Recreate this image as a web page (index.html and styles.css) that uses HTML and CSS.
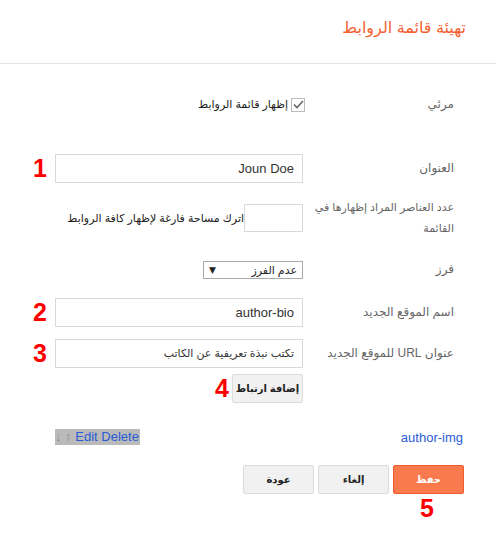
FILE: index.html
```html
<!DOCTYPE html>
<html lang="ar" dir="rtl">
<head>
    <meta charset="UTF-8">
    <meta name="viewport" content="width=device-width, initial-scale=1.0">
    <title>تهيئة قائمة الروابط</title>
    <link rel="stylesheet" href="styles.css">
</head>
<body>
    <div class="dialog">
        <div class="head">
            <h1>تهيئة قائمة الروابط</h1>
        </div>

        <div class="form">
            <div class="row row-visible">
                <div class="lbl">مرئي</div>
                <div class="ctl">
                    <label class="check">
                        <span class="box">
                            <svg width="11" height="9" viewBox="0 0 11 9"><path d="M1 4.5 L4 7.5 L10 1" fill="none" stroke="#666" stroke-width="1.6"/></svg>
                        </span>
                        إظهار قائمة الروابط
                    </label>
                </div>
                <div class="num"></div>
            </div>

            <div class="row row-title">
                <div class="lbl">العنوان</div>
                <div class="ctl"><input class="field" type="text" value="Joun Doe" dir="rtl"></div>
                <div class="num">1</div>
            </div>

            <div class="row row-count">
                <div class="lbl long">عدد العناصر المراد إظهارها في القائمة</div>
                <div class="ctl count">
                    <input class="field small" type="text">
                    <span class="hint">اترك مساحة فارغة لإظهار كافة الروابط</span>
                </div>
                <div class="num"></div>
            </div>

            <div class="row row-sort">
                <div class="lbl">فرز</div>
                <div class="ctl">
                    <div class="select">
                        <span>عدم الفرز</span>
                        <span class="arrow">▼</span>
                    </div>
                </div>
                <div class="num"></div>
            </div>

            <div class="row row-name">
                <div class="lbl">اسم الموقع الجديد</div>
                <div class="ctl"><input class="field" type="text" value="author-bio" dir="rtl"></div>
                <div class="num">2</div>
            </div>

            <div class="row row-url">
                <div class="lbl">عنوان URL للموقع الجديد</div>
                <div class="ctl"><input class="field ar" type="text" value="تكتب نبذة تعريفية عن الكاتب"></div>
                <div class="num">3</div>
            </div>

            <div class="row row-add">
                <div class="lbl"></div>
                <div class="ctl add">
                    <button class="btn">إضافة ارتباط</button>
                    <span class="num">4</span>
                </div>
                <div class="num"></div>
            </div>
        </div>

        <div class="links">
            <a href="#" class="link">author-img</a>
            <span class="actions" dir="ltr"><span class="arr">↓ ↑</span> <a href="#">Edit</a> <a href="#">Delete</a></span>
        </div>

        <div class="footer">
            <div class="save-wrap">
                <button class="btn save">حفظ</button>
                <span class="num five">5</span>
            </div>
            <button class="btn">إلغاء</button>
            <button class="btn">عودة</button>
        </div>
    </div>
</body>
</html>
```

FILE: styles.css
```css
body {
    margin: 0;
    background: #fff;
    font-family: "Liberation Sans", "DejaVu Sans", Arial, sans-serif;
    font-size: 13px;
    color: #333;
}

.dialog {
    width: 496px;
    height: 534px;
}

.head {
    height: 64px;
    border-bottom: 1px solid #e5e5e5;
    padding-right: 30px;
    box-sizing: border-box;
}

.head h1 {
    margin: 0;
    padding-top: 18px;
    font-size: 16px;
    font-weight: normal;
    color: #f4602f;
}

.row {
    display: grid;
    grid-template-columns: 144px 248px 1fr;
    column-gap: 7px;
    align-items: center;
    padding-right: 42px;
}

.lbl {
    color: #666;
    font-size: 12px;
    line-height: 21px;
}

.lbl.long {
    font-size: 11px;
    margin-left: -6px;
}

.ctl {
    display: flex;
    align-items: center;
}

.num {
    color: #f00;
    font-weight: bold;
    font-size: 25px;
    line-height: 25px;
    padding-right: 1px;
}

.row-visible { margin-top: 30px; }
.row-title { margin-top: 39px; }
.row-count { margin-top: 14px; align-items: start; }
.row-sort { margin-top: 20px; }
.row-name { margin-top: 18px; }
.row-url { margin-top: 12px; }
.row-add { margin-top: 6px; }

.check {
    display: flex;
    align-items: center;
    gap: 3px;
    margin-right: -2px;
    font-size: 11px;
    color: #222;
}

.box {
    width: 12px;
    height: 12px;
    border: 1px solid #bbb;
    display: flex;
    align-items: center;
    justify-content: center;
}

.field {
    width: 248px;
    height: 29px;
    box-sizing: border-box;
    border: 1px solid #d9d9d9;
    padding: 0 8px;
    font-family: "Liberation Sans", "DejaVu Sans", sans-serif;
    font-size: 13px;
    color: #333;
    outline: none;
}

.field.ar {
    font-size: 11px;
}

.count {
    margin-top: 7px;
}

.field.small {
    width: 59px;
    height: 28px;
}

.hint {
    font-size: 11px;
    color: #222;
}

.select {
    width: 100px;
    height: 18px;
    box-sizing: border-box;
    border: 1px solid #a9a9a9;
    position: relative;
    font-size: 11px;
    color: #222;
    padding-right: 5px;
    line-height: 16px;
}

.select .arrow {
    position: absolute;
    left: 5px;
    top: 0;
    font-size: 9px;
    font-family: "DejaVu Sans", sans-serif;
}

.btn {
    width: 71px;
    height: 29px;
    padding: 0;
    background: #f1f1f1;
    border: 1px solid #dcdcdc;
    border-radius: 2px;
    font-family: "Liberation Sans", "DejaVu Sans", sans-serif;
    font-size: 10px;
    font-weight: bold;
    color: #222;
    white-space: nowrap;
    cursor: pointer;
}

.add {
    gap: 2px;
}

.links {
    display: flex;
    justify-content: space-between;
    align-items: center;
    margin-top: 26px;
    padding: 0 33px 0 55px;
    font-size: 13px;
}

.links a {
    color: #2a5bd7;
    text-decoration: none;
}

.actions {
    background: #bababa;
    line-height: 16px;
    padding-right: 1px;
}

.arr {
    color: #888;
}

.footer {
    display: flex;
    gap: 4px;
    margin-top: 20px;
    padding-right: 32px;
}

.save-wrap {
    position: relative;
}

.btn.save {
    background: #f97a4c;
    border-color: #ef5b2b;
    color: #fff;
    height: 29px;
}

.five {
    position: absolute;
    top: 31px;
    right: 29px;
}
```
